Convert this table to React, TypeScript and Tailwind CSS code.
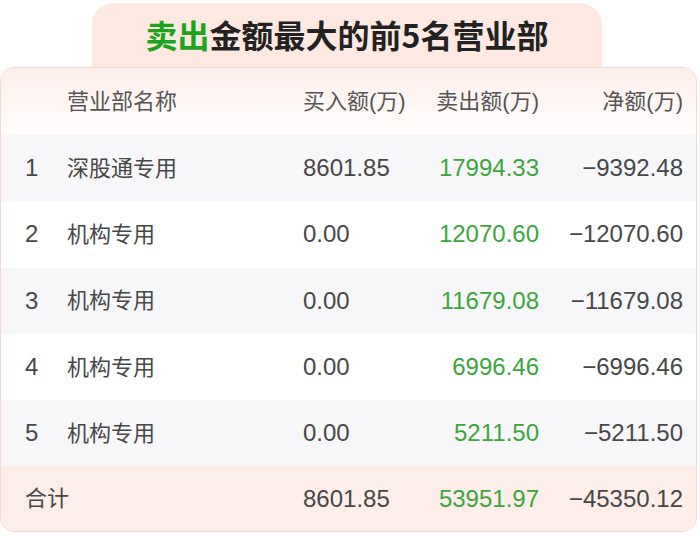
import React from "react";

const rows = [
  { i: "1", name: "深股通专用", buy: "8601.85", sell: "17994.33", net: "−9392.48" },
  { i: "2", name: "机构专用", buy: "0.00", sell: "12070.60", net: "−12070.60" },
  { i: "3", name: "机构专用", buy: "0.00", sell: "11679.08", net: "−11679.08" },
  { i: "4", name: "机构专用", buy: "0.00", sell: "6996.46", net: "−6996.46" },
  { i: "5", name: "机构专用", buy: "0.00", sell: "5211.50", net: "−5211.50" },
];

const font = { fontFamily: '"Liberation Sans", "Noto Sans CJK SC", sans-serif' };

export default function App() {
  return (
    <div className="w-[700px] h-[536px] bg-white overflow-hidden pt-[3px] pr-[3px]" style={font}>
      <div className="flex pl-[92px]">
        <div className="w-[510px] h-[64px] bg-[#fde9e1] rounded-t-[22px] flex items-center justify-center pb-[3px]">
          <span className="text-[32px] font-bold text-[#222] leading-none" style={{ fontFamily: '"Noto Sans CJK SC", sans-serif' }}>
            <span className="text-[#1ea31e]">卖出</span>金额最大的前5名营业部
          </span>
        </div>
      </div>
      <div className="border border-[#f6d8d3] rounded-[14px] overflow-hidden bg-white">
        <div className="h-[67px] flex items-center bg-gradient-to-b from-[#fdefeb] to-[#fffdfc] text-[22px] text-[#555]">
          <div className="w-[66px]" />
          <div className="w-[236px]">营业部名称</div>
          <div className="w-[107px]">买入额(万)</div>
          <div className="w-[129px] text-right">卖出额(万)</div>
          <div className="w-[144px] text-right">净额(万)</div>
        </div>
        {rows.map((r, idx) => (
          <div
            key={idx}
            className={`h-[66.3px] flex items-center text-[#474747] ${idx % 2 === 0 ? "bg-[#f7f7f9]" : "bg-white"}`}
          >
            <div className="w-[66px] pl-[24px] text-[24px]">{r.i}</div>
            <div className="w-[236px] text-[22px]">{r.name}</div>
            <div className="w-[107px] text-[24px]">{r.buy}</div>
            <div className="w-[129px] text-right text-[24px] text-[#3ca63c]">{r.sell}</div>
            <div className="w-[144px] text-right text-[24px]">{r.net}</div>
          </div>
        ))}
        <div className="h-[65px] flex items-center bg-[#fdeeea] text-[#474747]">
          <div className="w-[302px] pl-[24px] text-[22px]">合计</div>
          <div className="w-[107px] text-[24px]">8601.85</div>
          <div className="w-[129px] text-right text-[24px] text-[#3ca63c]">53951.97</div>
          <div className="w-[144px] text-right text-[24px]">−45350.12</div>
        </div>
      </div>
    </div>
  );
}
